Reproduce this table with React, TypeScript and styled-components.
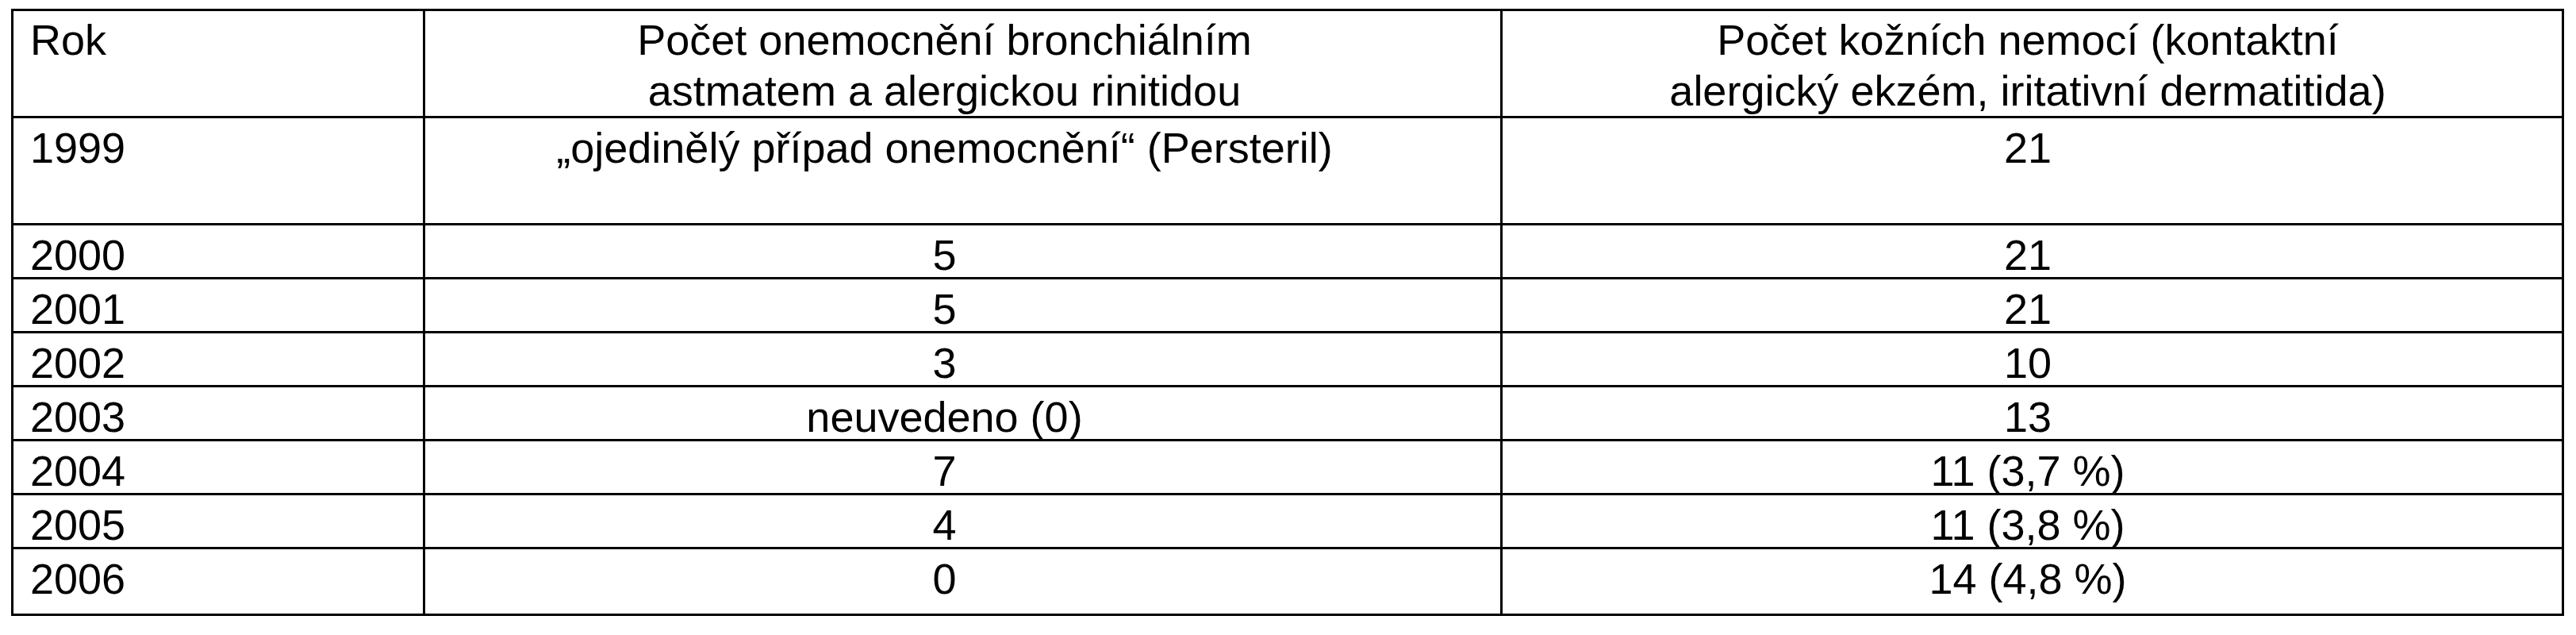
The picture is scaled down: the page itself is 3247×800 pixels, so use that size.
import styled, { createGlobalStyle } from 'styled-components';

const Global = createGlobalStyle`
  html, body {
    margin: 0;
    background: #fff;
  }
`;

const Sheet = styled.table`
  box-sizing: border-box;
  width: 3218px;
  margin: 11px 0 0 14px;
  table-layout: fixed;
  border-collapse: separate;
  border-spacing: 0;
  border-top: 3px solid #000;
  border-left: 3px solid #000;
  font-family: 'Liberation Sans', Arial, sans-serif;
  font-size: 54px;
  color: #000;
`;

const Row = styled.tr<{ $h: number }>`
  height: ${(p) => p.$h}px;
`;

// header lines sit a bit closer to the top and further apart
const HeadRow = styled(Row)`
  & > td {
    padding-top: 4px;
    line-height: 64px;
  }
`;

type Align = 'year' | 'mid' | 'right';

const pads: Record<Align, string> = {
  year: '9px 10px 0 21px',
  mid: '9px 56px 0 10px',
  right: '9px 21px 0 10px',
};

const Cell = styled.td<{ $col: Align; $tail?: boolean }>`
  box-sizing: border-box;
  position: relative;
  vertical-align: top;
  padding: ${(p) => pads[p.$col]};
  text-align: ${(p) => (p.$col === 'year' ? 'left' : 'center')};
  line-height: 56px;
  white-space: nowrap;
  border-right: 3px solid #000;
  border-bottom: 3px solid #000;

  ${(p) =>
    p.$tail &&
    `
    &::after {
      content: '';
      position: absolute;
      right: -3px;
      bottom: -9px;
      width: 3px;
      height: 6px;
      background: #000;
    }
  `}
`;

const rows: [string, string, string][] = [
  ['1999', '„ojedinělý případ onemocnění“ (Persteril)', '21'],
  ['2000', '5', '21'],
  ['2001', '5', '21'],
  ['2002', '3', '10'],
  ['2003', 'neuvedeno (0)', '13'],
  ['2004', '7', '11 (3,7 %)'],
  ['2005', '4', '11 (3,8 %)'],
  ['2006', '0', '14 (4,8 %)'],
];

function heightFor(i: number) {
  if (i === 0) return 135;
  if (i === rows.length - 1) return 84;
  return 68;
}

export default function App() {
  return (
    <>
      <Global />
      <Sheet>
        <colgroup>
          <col style={{ width: 519 }} />
          <col style={{ width: 1358 }} />
          <col style={{ width: 1338 }} />
        </colgroup>
        <tbody>
          <HeadRow $h={135}>
            <Cell $col="year">Rok</Cell>
            <Cell $col="mid">
              Počet onemocnění bronchiálním
              <br />
              astmatem a alergickou rinitidou
            </Cell>
            <Cell $col="right">
              Počet kožních nemocí (kontaktní
              <br />
              alergický ekzém, iritativní dermatitida)
            </Cell>
          </HeadRow>
          {rows.map(([year, asthma, skin], i) => (
            <Row key={year} $h={heightFor(i)}>
              <Cell $col="year" $tail={i === rows.length - 1}>
                {year}
              </Cell>
              <Cell $col="mid">{asthma}</Cell>
              <Cell $col="right">{skin}</Cell>
            </Row>
          ))}
        </tbody>
      </Sheet>
    </>
  );
}
